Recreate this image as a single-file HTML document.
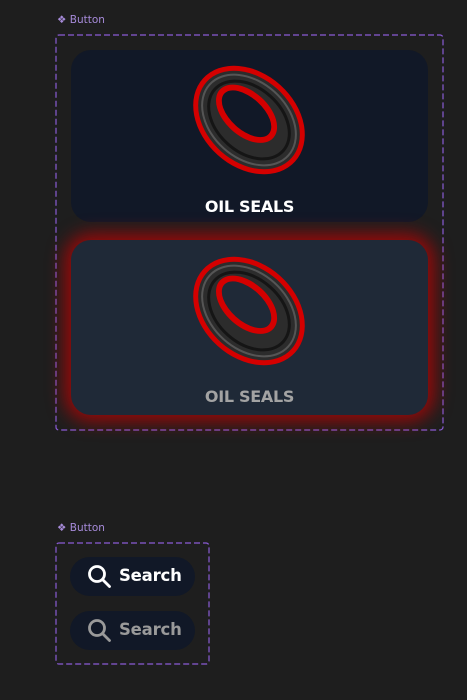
<!DOCTYPE html>
<html><head><style>
body{margin:0;width:467px;height:700px;background:#1e1e1e;font-family:"DejaVu Sans","Liberation Sans",sans-serif;position:relative;overflow:hidden}
.lbl{position:absolute;color:#a78bda;font-size:10.5px}
.frame{position:absolute}
.card{position:absolute;left:71px;width:357px;border-radius:20px}
.t{position:absolute;left:0;right:0;text-align:center;font-weight:bold;font-size:16px;letter-spacing:-0.3px}
.btn{position:absolute;left:70px;width:125px;height:39px;border-radius:20px;background:#111827}
.btn span{position:absolute;left:49px;top:9px;font-weight:bold;font-size:16.5px;letter-spacing:-0.2px}
.btn svg{position:absolute;left:17px;top:7px}
</style></head><body>
<div class="lbl" style="left:57px;top:14px">❖ Button</div>
<svg class="frame" style="left:55px;top:34px" width="389" height="397"><rect x="1" y="1" width="387" height="395" rx="3" fill="none" stroke="#8a5cd6" stroke-width="1.2" stroke-dasharray="6 3"/></svg>
<div class="card" style="top:50px;height:172px;background:#111827">
<svg width="357" height="172" style="position:absolute;left:0;top:0"><g transform="translate(178,70) rotate(42)">
<ellipse rx="62" ry="47" fill="#d40000"/><ellipse rx="57" ry="42" fill="#2c2c2c"/><ellipse rx="53" ry="38" fill="none" stroke="#555" stroke-width="2"/><ellipse rx="46" ry="32" fill="none" stroke="#151515" stroke-width="3"/><ellipse cx="-6" cy="-3" rx="36" ry="22" fill="#d40000"/><ellipse cx="-6" cy="-3" rx="30" ry="16" fill="#111827"/></g></svg>
<div class="t" style="top:147px;color:#fff">OIL SEALS</div></div>
<div class="card" style="top:240px;height:175px;background:#1f2937;box-shadow:0 0 18px 6px rgba(200,0,0,.75)">
<svg width="357" height="175" style="position:absolute;left:0;top:0"><g transform="translate(178,71) rotate(42)">
<ellipse rx="62" ry="47" fill="#d40000"/><ellipse rx="57" ry="42" fill="#2c2c2c"/><ellipse rx="53" ry="38" fill="none" stroke="#555" stroke-width="2"/><ellipse rx="46" ry="32" fill="none" stroke="#151515" stroke-width="3"/><ellipse cx="-6" cy="-3" rx="36" ry="22" fill="#d40000"/><ellipse cx="-6" cy="-3" rx="30" ry="16" fill="#1f2937"/></g></svg>
<div class="t" style="top:147px;color:#a3a3a3">OIL SEALS</div></div>
<div class="lbl" style="left:57px;top:522px">❖ Button</div>
<svg class="frame" style="left:55px;top:542px" width="155" height="123"><rect x="1" y="1" width="153" height="121" rx="3" fill="none" stroke="#8a5cd6" stroke-width="1.2" stroke-dasharray="6 3"/></svg>
<div class="btn" style="top:557px"><svg width="26" height="26"><circle cx="10" cy="10" r="7.5" fill="none" stroke="#fff" stroke-width="2.8"/><line x1="15.5" y1="15.5" x2="22.5" y2="22.5" stroke="#fff" stroke-width="2.8" stroke-linecap="round"/></svg><span style="color:#fff">Search</span></div>
<div class="btn" style="top:611px"><svg width="26" height="26"><circle cx="10" cy="10" r="7.5" fill="none" stroke="#9a9a9a" stroke-width="2.8"/><line x1="15.5" y1="15.5" x2="22.5" y2="22.5" stroke="#9a9a9a" stroke-width="2.8" stroke-linecap="round"/></svg><span style="color:#9a9a9a">Search</span></div>
</body></html>
